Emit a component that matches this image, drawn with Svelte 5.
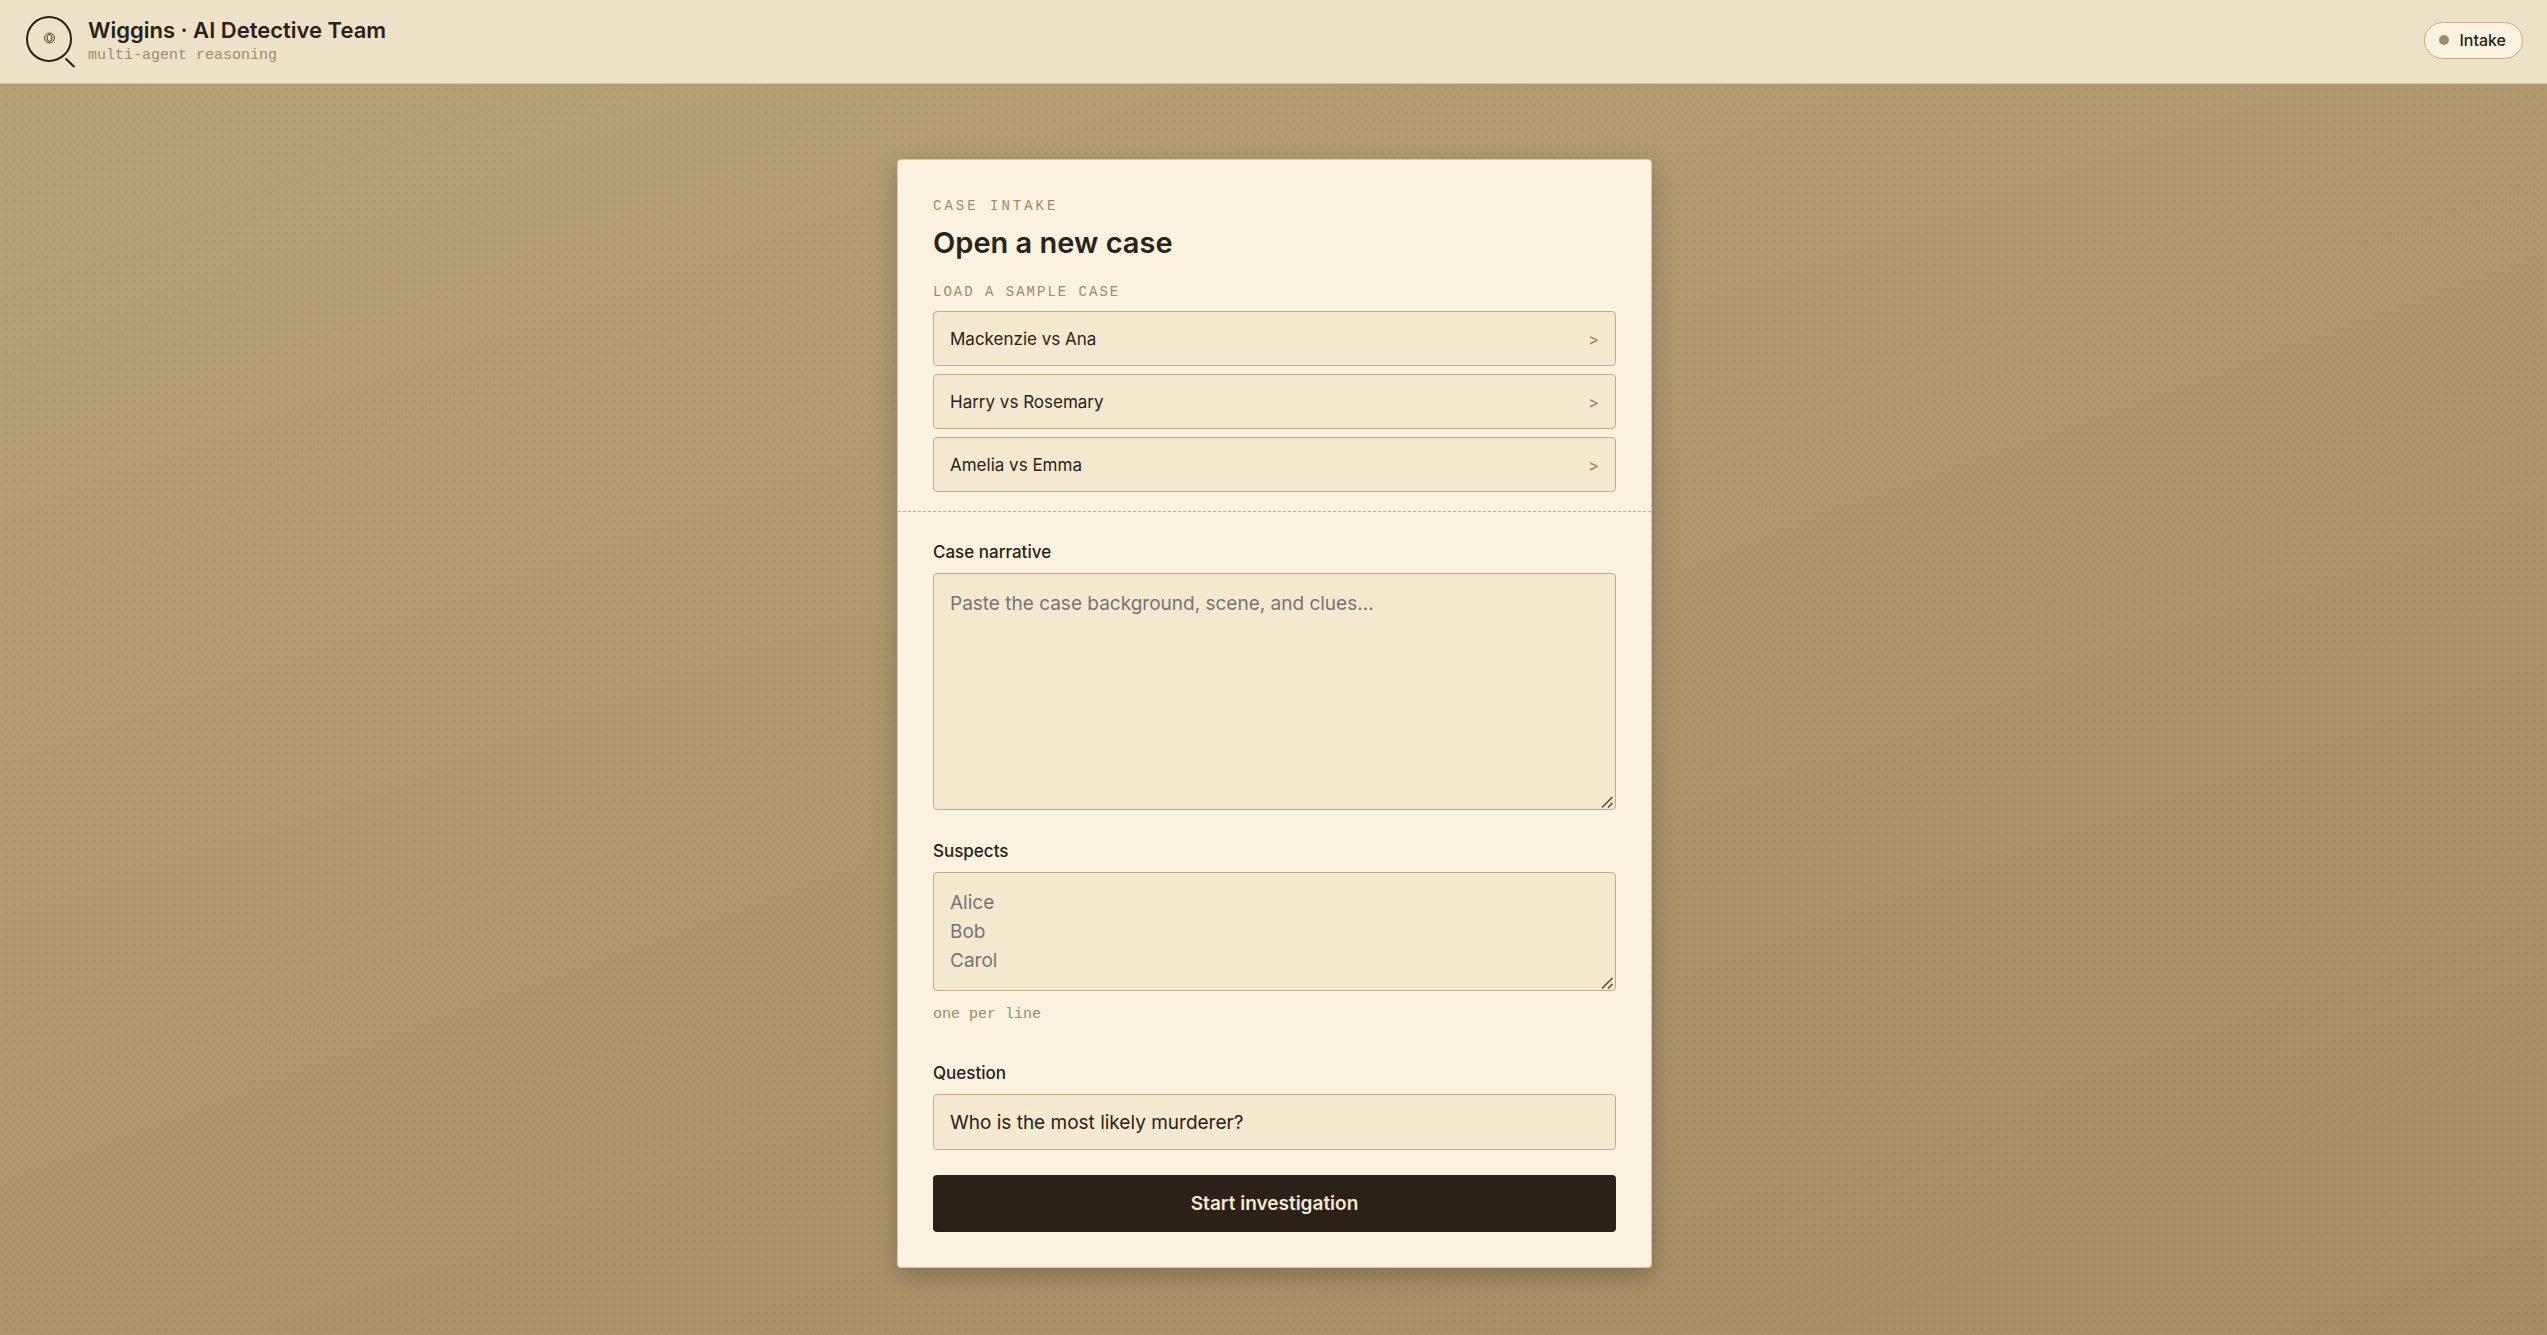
<script lang="ts">
  type SampleCase = {
    label: string
    narrative: string
    suspects: string[]
  }

  const samples: SampleCase[] = [
    { label: 'Mackenzie vs Ana', narrative: '', suspects: ['Mackenzie', 'Ana'] },
    { label: 'Harry vs Rosemary', narrative: '', suspects: ['Harry', 'Rosemary'] },
    { label: 'Amelia vs Emma', narrative: '', suspects: ['Amelia', 'Emma'] },
  ]

  let narrative = $state('')
  let suspects = $state('')
  let question = $state('Who is the most likely murderer?')

  function loadSample(sample: SampleCase) {
    narrative = sample.narrative
    suspects = sample.suspects.join('\n')
  }

  function startInvestigation(event: SubmitEvent) {
    event.preventDefault()
  }
</script>

<div class="app">
  <header class="header">
    <div class="brand">
      <svg class="brand__logo" viewBox="0 0 52 52" fill="none" aria-hidden="true">
        <circle cx="25" cy="25" r="22" stroke="currentColor" stroke-width="2" />
        <path d="M41.5 44.5 50.5 53" stroke="currentColor" stroke-width="2" />
        <circle cx="25.500" cy="24" r="4.900" stroke="currentColor" stroke-width="0.900" />
        <ellipse cx="25.500" cy="24" rx="2.500" ry="3.400" stroke="currentColor" stroke-width="0.900" />
      </svg>
      <div class="brand__text">
        <div class="brand__name">Wiggins · AI Detective Team</div>
        <div class="brand__tagline">multi-agent reasoning</div>
      </div>
    </div>
    <div class="status">
      <span class="status__dot"></span>
      <span>Intake</span>
    </div>
  </header>

  <main class="main">
    <div class="card">
      <section class="samples">
        <p class="eyebrow">Case intake</p>
        <h1 class="title">Open a new case</h1>
        <p class="samples__label">Load a sample case</p>
        <div class="samples__list">
          {#each samples as sample}
            <button class="sample" type="button" onclick={() => loadSample(sample)}>
              <span>{sample.label}</span>
              <span class="sample__arrow">&gt;</span>
            </button>
          {/each}
        </div>
      </section>

      <form class="form" onsubmit={startInvestigation}>
        <div class="field">
          <label class="field__label" for="narrative">Case narrative</label>
          <textarea
            id="narrative"
            class="field__control field__control--tall"
            placeholder="Paste the case background, scene, and clues…"
            bind:value={narrative}
          ></textarea>
        </div>

        <div class="field">
          <label class="field__label" for="suspects">Suspects</label>
          <textarea
            id="suspects"
            class="field__control"
            rows="3"
            placeholder={'Alice\nBob\nCarol'}
            aria-describedby="suspects-hint"
            bind:value={suspects}
          ></textarea>
          <p class="field__hint" id="suspects-hint">one per line</p>
        </div>

        <div class="field">
          <label class="field__label" for="question">Question</label>
          <input id="question" class="field__control field__control--line" type="text" bind:value={question} />
        </div>

        <button class="submit" type="submit">Start investigation</button>
      </form>
    </div>
  </main>
</div>

<style>
  :global(body) {
    margin: 0;
  }

  .app {
    --ink: #2a2118;
    --muted: #9b8b68;
    --line: #c4ae7d;
    --paper: #f9f2df;
    --field: #f3e9cf;
    --mono: 'Liberation Mono', monospace;
    min-height: 100vh;
    display: flex;
    flex-direction: column;
    box-sizing: border-box;
    color: var(--ink);
    font-family: Inter, sans-serif;
    background:
      radial-gradient(circle at 6px 4px, rgb(90 65 25 / 0.07) 1px, transparent 2px) 0 5px / 8px 8px,
      linear-gradient(160deg, #b8a278, #a58d63);
  }

  .header {
    display: flex;
    align-items: center;
    justify-content: space-between;
    padding: 14px 24px 17px;
    border-bottom: 1px solid #d3c398;
    background: #ece2c7;
  }

  .brand {
    display: flex;
    align-items: center;
    gap: 12px;
  }

  .brand__logo {
    width: 52px;
    height: 52px;
    flex-shrink: 0;
    overflow: visible;
  }

  .brand__name {
    font-size: 22px;
    font-weight: 600;
    line-height: 32px;
  }

  .brand__tagline {
    color: var(--muted);
    font-family: var(--mono);
    font-size: 15px;
    line-height: 20px;
  }

  .status {
    display: flex;
    align-items: center;
    gap: 10px;
    padding: 0 16px 0 14px;
    border: 1px solid var(--line);
    border-radius: 20px;
    background: var(--paper);
    font-size: 16px;
    font-weight: 500;
    line-height: 35px;
  }

  .status__dot {
    width: 10px;
    height: 10px;
    border-radius: 50%;
    background: var(--muted);
  }

  .main {
    flex: 1;
    display: flex;
    justify-content: center;
    align-items: flex-start;
    padding: 75px 24px 67px 26px;
  }

  .card {
    width: 100%;
    max-width: 755px;
    box-sizing: border-box;
    border: 1px solid #d6c79c;
    border-radius: 4px;
    background: var(--paper);
    box-shadow: 0 8px 24px rgb(42 33 24 / 0.3);
  }

  .samples {
    padding: 36px 35px 19px;
    border-bottom: 1px dashed var(--line);
  }

  .eyebrow,
  .samples__label {
    margin: 0;
    color: var(--muted);
    font-family: var(--mono);
    font-size: 14px;
    line-height: 20px;
    text-transform: uppercase;
  }

  .eyebrow {
    letter-spacing: 3px;
  }

  .samples__label {
    letter-spacing: 2px;
  }

  .title {
    margin: 7px 0 19px;
    font-size: 29px;
    font-weight: 600;
    line-height: 40px;
  }

  .samples__list {
    display: flex;
    flex-direction: column;
    gap: 8px;
    margin-top: 9px;
  }

  .sample {
    display: flex;
    align-items: baseline;
    justify-content: space-between;
    padding: 15px 16px 13px;
    border: 1px solid var(--line);
    border-radius: 4px;
    background: var(--field);
    color: var(--ink);
    font-family: inherit;
    font-size: 17px;
    line-height: 25px;
    cursor: pointer;
  }

  .sample__arrow {
    color: var(--muted);
    font-size: 16px;
    font-weight: 500;
  }

  .form {
    padding: 27px 35px 35px;
  }

  .field {
    display: flex;
    flex-direction: column;
    margin-bottom: 28px;
  }

  .field:last-of-type {
    margin-bottom: 25px;
  }

  .field__label {
    margin-bottom: 7px;
    font-size: 17px;
    font-weight: 500;
    line-height: 27px;
  }

  .field__control {
    padding: 15px 16px;
    border: 1px solid var(--line);
    border-radius: 4px;
    box-sizing: border-box;
    background: var(--field);
    color: var(--ink);
    font-family: inherit;
    font-size: 19px;
    line-height: 29px;
    resize: vertical;
  }

  .field__control::placeholder {
    color: #757575;
  }

  .field__control::-webkit-resizer {
    background: url("data:image/svg+xml,%3Csvg xmlns='http://www.w3.org/2000/svg' width='15' height='15' stroke='%23535146' stroke-width='1.6'%3E%3Cpath d='M2 13.500 12.500 3M8 13.500 12.500 9'/%3E%3C/svg%3E") no-repeat;
  }

  .field__control--tall {
    min-height: 237px;
  }

  .field__control--line {
    height: 56px;
    padding: 0 16px;
  }

  .field__hint {
    margin: 12px 0 5px;
    color: var(--muted);
    font-family: var(--mono);
    font-size: 15px;
    line-height: 24px;
  }

  .submit {
    width: 100%;
    padding: 14px;
    border: 0;
    border-radius: 4px;
    background: var(--ink);
    color: #f3e9cf;
    font-family: inherit;
    font-size: 19px;
    font-weight: 600;
    line-height: 29px;
    cursor: pointer;
  }

  .sample:hover,
  .field__control:focus {
    border-color: var(--muted);
  }
</style>
